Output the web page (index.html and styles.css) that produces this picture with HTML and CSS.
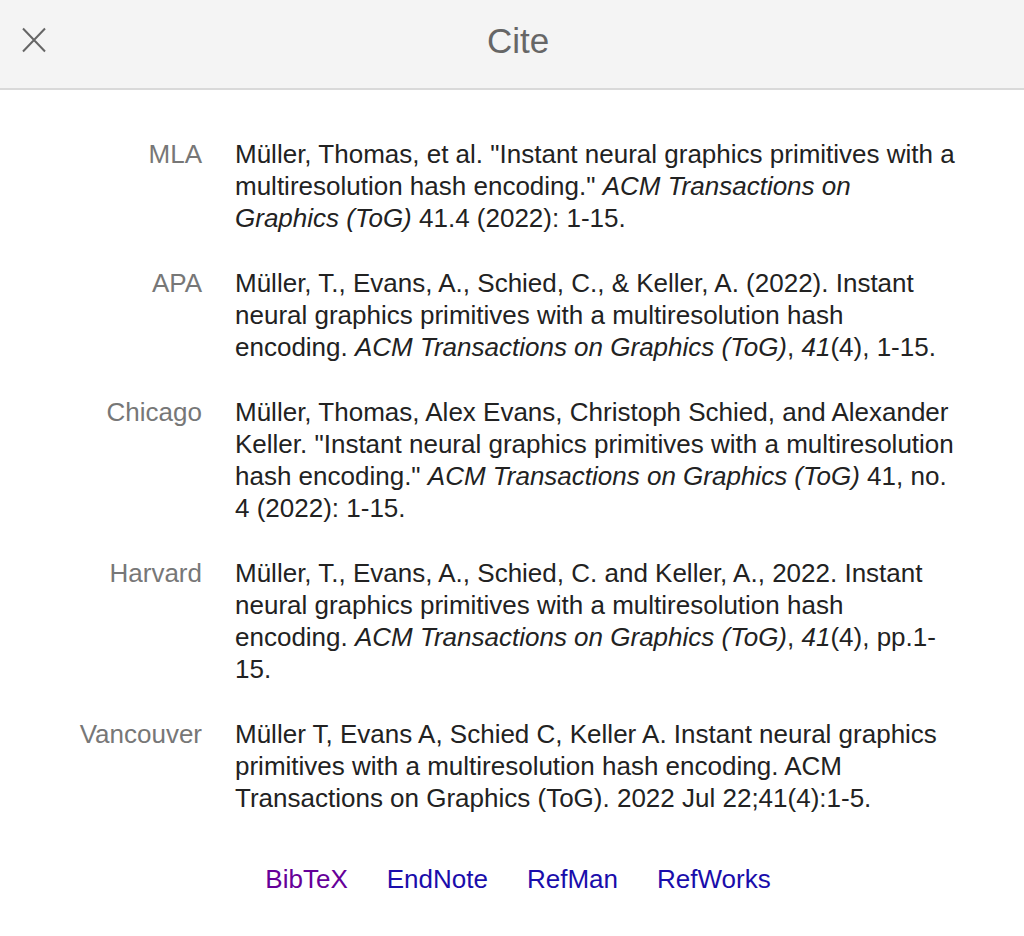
FILE: index.html
```html
<!DOCTYPE html>
<html>
<head>
<meta charset="utf-8">
<link rel="stylesheet" href="styles.css">
</head>
<body>
<div class="dialog">
  <header class="bar">
    <button class="close" aria-label="Close">
      <svg width="24" height="26" viewBox="0 0 24 26"><path d="M1 1.5 L23 24.5 M23 1.5 L1 24.5" stroke="#666" stroke-width="2" fill="none"/></svg>
    </button>
    <h1 class="title">Cite</h1>
  </header>
  <div class="cites">
    <div class="label">MLA</div>
    <div class="text">Müller, Thomas, et al. "Instant neural graphics primitives with a multiresolution hash encoding." <i>ACM Transactions on Graphics (ToG)</i> 41.4 (2022): 1-15.</div>
    <div class="label">APA</div>
    <div class="text">Müller, T., Evans, A., Schied, C., &amp; Keller, A. (2022). Instant neural graphics primitives with a multiresolution hash encoding. <i>ACM Transactions on Graphics (ToG)</i>, <i>41</i>(4), 1-15.</div>
    <div class="label">Chicago</div>
    <div class="text">Müller, Thomas, Alex Evans, Christoph Schied, and Alexander Keller. "Instant neural graphics primitives with a multiresolution hash encoding." <i>ACM Transactions on Graphics (ToG)</i> 41, no. 4 (2022): 1-15.</div>
    <div class="label">Harvard</div>
    <div class="text">Müller, T., Evans, A., Schied, C. and Keller, A., 2022. Instant neural graphics primitives with a multiresolution hash encoding. <i>ACM Transactions on Graphics (ToG)</i>, <i>41</i>(4), pp.1-15.</div>
    <div class="label">Vancouver</div>
    <div class="text">Müller T, Evans A, Schied C, Keller A. Instant neural graphics primitives with a multiresolution hash encoding. ACM Transactions on Graphics (ToG). 2022 Jul 22;41(4):1-5.</div>
  </div>
  <nav class="links">
    <a href="#" class="visited">BibTeX</a>
    <a href="#">EndNote</a>
    <a href="#">RefMan</a>
    <a href="#">RefWorks</a>
  </nav>
</div>
</body>
</html>
```

FILE: styles.css
```css
html, body {
  margin: 0;
  padding: 0;
  background: #fff;
  font-family: "Liberation Sans", Arial, sans-serif;
}
.dialog {
  width: 1024px;
}
.bar {
  position: relative;
  height: 88px;
  background: #f4f4f4;
  border-bottom: 2px solid #d9d9d9;
  display: flex;
  align-items: center;
  justify-content: center;
}
.close {
  position: absolute;
  left: 22px;
  top: 27px;
  width: 24px;
  height: 26px;
  padding: 0;
  border: 0;
  background: none;
}
.close svg { display: block; }
.title {
  margin: 0 0 6px 12px;
  font-weight: normal;
  font-size: 35px;
  color: #666;
}
.cites {
  display: grid;
  grid-template-columns: 202px 724px;
  column-gap: 33px;
  row-gap: 33px;
  padding-top: 48px;
  font-size: 26px;
  line-height: 32px;
}
.label {
  text-align: right;
  color: #777;
}
.text {
  color: #222;
}
.links {
  display: flex;
  justify-content: center;
  gap: 39px;
  padding: 49px 0 0 12px;
  font-size: 26px;
  line-height: 32px;
}
.links a {
  color: #1a0dab;
  text-decoration: none;
}
.links a.visited {
  color: #660099;
}
```
